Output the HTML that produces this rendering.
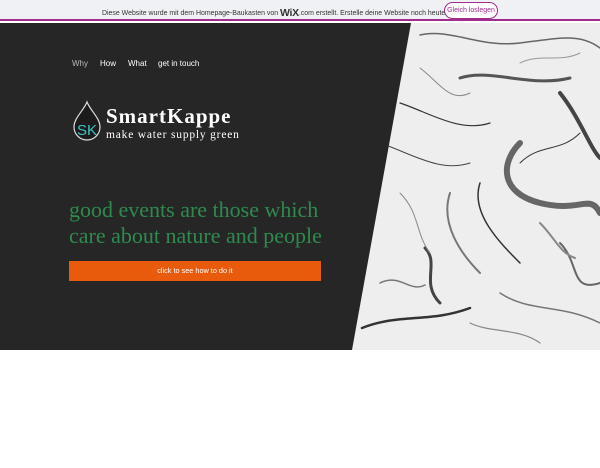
<!DOCTYPE html>
<html><head><meta charset="utf-8"><style>
*{margin:0;padding:0;box-sizing:border-box}
body{width:600px;height:468px;background:#fff;position:relative;overflow:hidden;font-family:"Liberation Sans",sans-serif}
.bar{position:absolute;left:0;top:0;width:600px;height:21px;background:#f0f1f4;border-bottom:2px solid #a12c8b}
.bar .t{position:absolute;left:102px;top:7px;font-size:6.95px;color:#333;white-space:nowrap}
.bar .t b{font-size:10.5px;font-weight:bold;letter-spacing:-.3px;vertical-align:-1px}
.bar .btn{position:absolute;left:444px;top:2px;width:54px;height:17px;border:1px solid #a12c8b;border-radius:9px;font-size:7px;color:#a12c8b;text-align:center;line-height:15px;background:#fff}
.hero{position:absolute;left:0;top:23px;width:600px;height:327px;background:#262626}
nav{position:absolute;top:59px;left:72px;font-size:8px;color:#fff}
nav span{position:absolute;white-space:nowrap}
.logo{position:absolute;left:72px;top:100px}
.name{position:absolute;left:106px;top:104px;font-family:"Liberation Serif",serif;font-weight:bold;font-size:21px;color:#fff;letter-spacing:1px}
.sub{position:absolute;left:106px;top:129px;font-family:"Liberation Serif",serif;font-size:11.5px;color:#fff;letter-spacing:.8px;white-space:nowrap}
.h{position:absolute;left:69px;top:197px;font-family:"Liberation Serif",serif;font-size:22px;color:#2e8b4e;line-height:26px;white-space:nowrap}
.cta{position:absolute;left:69px;top:261px;width:252px;height:20px;background:#e85a0c;color:#fff;font-size:7.3px;text-align:center;line-height:20px}
</style></head><body>
<div class="bar"><div class="t">Diese Website wurde mit dem Homepage-Baukasten von <b>WiX</b>.com erstellt. Erstelle deine Website noch heute.</div><div class="btn">Gleich loslegen</div></div>
<div class="hero"></div>
<svg style="position:absolute;left:0;top:23px" width="600" height="327">
<defs><clipPath id="c"><polygon points="411,0 600,0 600,327 352,327"/></clipPath></defs>
<g clip-path="url(#c)">
<rect x="340" y="0" width="260" height="327" fill="#eeeeee"/>
<g fill="none" stroke-linecap="round">
<path d="M420 12 C450 5 480 25 520 20 S580 10 600 25" stroke-width="1.5" stroke="#666"/>
<path d="M400 80 C430 90 460 110 490 100" stroke-width="1.2" stroke="#333"/>
<path d="M460 55 C490 45 530 65 570 55" stroke-width="3" stroke="#555"/>
<path d="M520 120 C500 140 500 170 540 180 S590 170 600 190" stroke-width="6" stroke="#666"/>
<path d="M450 170 C440 200 460 230 480 250" stroke-width="2" stroke="#777"/>
<path d="M480 160 C470 190 500 220 520 240" stroke-width="1.5" stroke="#333"/>
<path d="M380 120 C410 130 440 150 470 140" stroke-width="1" stroke="#444"/>
<path d="M560 70 C580 95 590 125 600 135" stroke-width="4" stroke="#444"/>
<path d="M362 305 C400 290 430 300 470 285" stroke-width="2.5" stroke="#333"/>
<path d="M500 270 C530 290 560 280 600 300" stroke-width="1.5" stroke="#777"/>
<path d="M425 225 C440 240 420 260 440 280" stroke-width="3" stroke="#444"/>
<path d="M560 220 C580 240 570 270 600 260" stroke-width="2" stroke="#666"/>
<path d="M420 45 C440 60 450 80 470 70" stroke-width="1" stroke="#888"/>
<path d="M580 110 C560 130 540 120 520 140" stroke-width="1" stroke="#333"/>
<path d="M400 170 C420 190 415 210 430 230" stroke-width="1" stroke="#888"/>
<path d="M520 40 C540 30 560 40 580 30" stroke-width="1" stroke="#999"/>
<path d="M540 200 C555 215 560 230 575 235" stroke-width="2" stroke="#888"/>
<path d="M380 260 C400 250 410 270 425 262" stroke-width="1.5" stroke="#777"/>
<path d="M470 300 C490 310 520 305 540 320" stroke-width="1.2" stroke="#888"/>
</g></g></svg>
<nav><span style="left:0;color:#bbb">Why</span><span style="left:28px">How</span><span style="left:56px">What</span><span style="left:86px">get in touch</span></nav>
<svg class="logo" width="30" height="42" viewBox="0 0 30 42"><path d="M15 2 C12 10 2 18 2 27 A13 13 0 0 0 28 27 C28 18 18 10 15 2Z" fill="#1c1c1c" stroke="#ddd" stroke-width="1.2"/><text x="5" y="35" font-family="Liberation Sans" font-size="15" fill="#3cc4c4">SK</text></svg>
<div class="name">SmartKappe</div>
<div class="sub">make water supply green</div>
<div class="h">good events are those which<br>care about nature and people</div>
<div class="cta">click to see how to do it</div>
</body></html>
